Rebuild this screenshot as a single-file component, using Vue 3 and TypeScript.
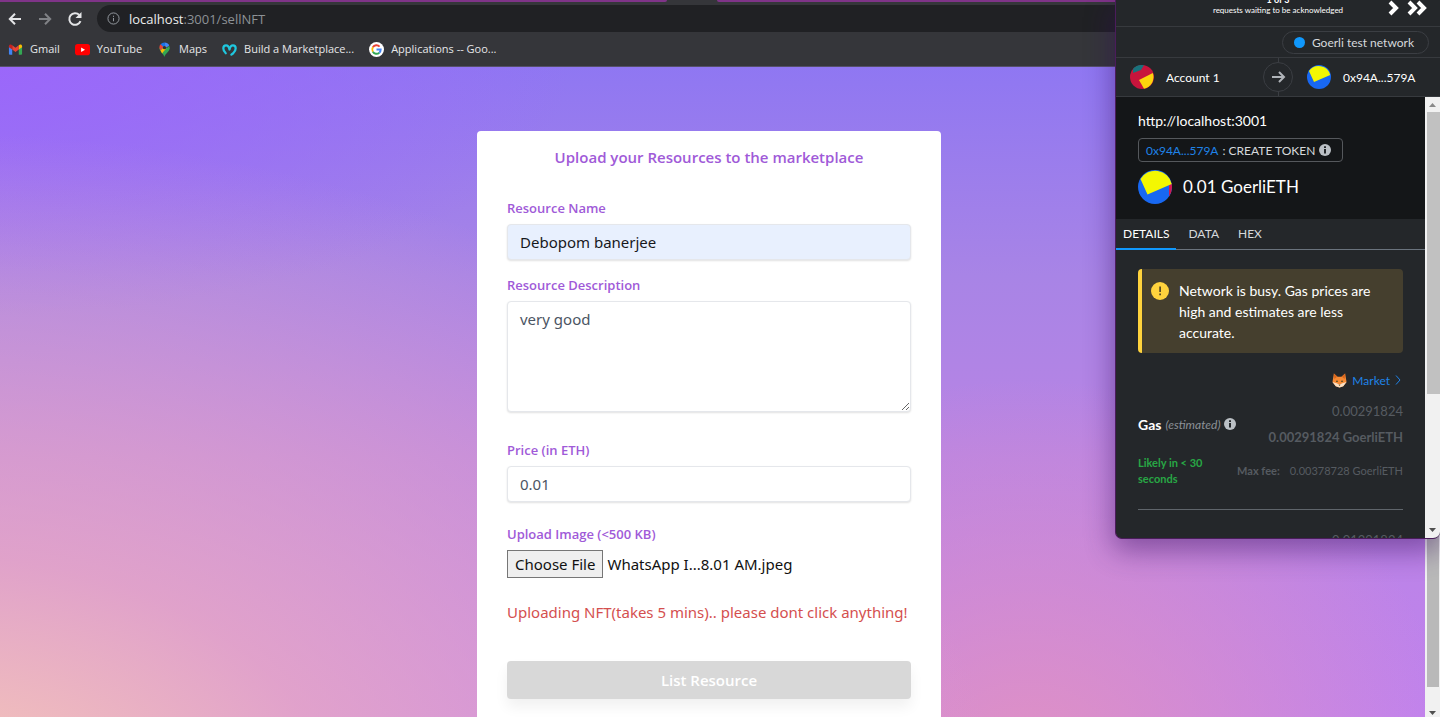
<script setup lang="ts">
import { ref } from 'vue'

const address = ref('localhost:3001/sellNFT')
const resourceName = ref('Debopom banerjee')
const description = ref('very good')
const price = ref('0.01')
const fileName = ref('WhatsApp I...8.01 AM.jpeg')
const activeTab = ref('DETAILS')
const tabs = ['DETAILS', 'DATA', 'HEX']
</script>

<template>
  <div class="window">
    <header class="browser">
      <div class="tabstrip"><span class="tabs-left"></span><span class="tabs-right"></span></div>
      <div class="toolbar">
        <button class="nav" aria-label="Back">
          <svg viewBox="0 0 16 16"><path d="M14 8H3M8 2.800 2.800 8 8 13.200" /></svg>
        </button>
        <button class="nav dim" aria-label="Forward">
          <svg viewBox="0 0 16 16"><path d="M2 8h11M8 2.800 13.200 8 8 13.200" /></svg>
        </button>
        <button class="nav" aria-label="Reload">
          <svg viewBox="0 0 16 16"><path d="M13.500 10.200A5.800 5.800 0 1 1 12.300 4" /><path class="fill" d="M14.500 1v6H8.500z" /></svg>
        </button>
        <div class="omnibox">
          <svg class="site" viewBox="0 0 14 14"><circle cx="7" cy="7" r="6" /><path d="M7 6.400v3.600M7 4v1.300" /></svg>
          <label class="url"><span class="host">localhost</span>:3001/sellNFT<input v-model="address" class="ghost" aria-label="Address" /></label>
        </div>
      </div>
      <nav class="bookmarks">
        <a href="#">
          <svg viewBox="0 0 16 16"><path fill="#4285f4" d="M1 4.500 4.500 7v6.500H2a1 1 0 0 1-1-1z" /><path fill="#34a853" d="M11.500 7 15 4.500v8a1 1 0 0 1-1 1h-2.500z" /><path fill="#ea4335" d="M4.500 3.500 8 6.200l3.500-2.700V8L8 10.600 4.500 8z" /><path fill="#c5221f" d="M1 4.500C1 2.700 3 2 4.500 3.500V8L1 5.500z" /><path fill="#fbbc04" d="M15 4.500c0-1.800-2-2.500-3.500-1V8L15 5.500z" /></svg>
          Gmail</a>
        <a href="#">
          <svg viewBox="0 0 16 16"><rect x="0" y="2.200" width="16" height="12" rx="3" fill="#f00" /><path fill="#fff" d="m6.500 5.800 4.200 2.400-4.200 2.400z" /></svg>
          YouTube</a>
        <a href="#">
          <svg viewBox="0 0 16 16"><path fill="#34a853" d="M8 16C7.300 12.500 2.500 10 2.500 6h11c0 4-4.800 6-5.500 10z" /><path fill="#4285f4" d="M8 .500A5.500 5.500 0 0 1 13 4L8 7z" /><path fill="#1a73e8" d="M3.800 2.500A5.500 5.500 0 0 1 8 .500L9 4 6 6z" /><path fill="#ea4335" d="M3.800 2.500 7 5.500 3.800 9C2.300 7.500 2 4.700 3.800 2.500z" /><path fill="#fbbc04" d="m3.800 9 5.200-5 1 3-4.500 5.300C4.700 11.200 4.200 10 3.800 9z" /><path fill="#34a853" d="M13 4c1.500 4-1.500 6-3.500 8.500L6 11.500z" /><circle cx="8" cy="6" r="1.800" fill="#303134" /></svg>
          Maps</a>
        <a href="#">
          <svg viewBox="0 0 16 16"><path fill="none" stroke="#1fc7de" stroke-width="2.400" stroke-linecap="round" stroke-linejoin="round" d="M4 12C.500 9 .500 3.500 4.300 3.500 6.500 3.500 7.500 5.500 8 8c.500-2.500 1.500-4.500 3.700-4.500 3.800 0 3.800 5.500.300 8.500L10 13.500" /></svg>
          Build a Marketplace...</a>
        <a href="#">
          <svg viewBox="0 0 16 16"><circle cx="8" cy="8" r="8" fill="#fff" /><g fill="none" stroke-width="2"><path stroke="#ea4335" d="M4.100 5.700A4.500 4.500 0 0 1 11.300 4.900" /><path stroke="#fbbc04" d="M4.100 5.700a4.500 4.500 0 0 0 0 4.600" /><path stroke="#34a853" d="M4.100 10.300a4.500 4.500 0 0 0 6.900 1.100" /><path stroke="#4285f4" d="M11 11.400A4.500 4.500 0 0 0 12.500 8H8" /></g></svg>
          Applications -- Goo...</a>
      </nav>
    </header>

    <div class="viewport">
      <main class="page">
        <form class="card" @submit.prevent>
          <h1>Upload your Resources to the marketplace</h1>
          <div class="field name">
            <label for="name">Resource Name</label>
            <input id="name" v-model="resourceName" class="box autofilled" type="text" />
          </div>
          <div class="field description">
            <label for="description">Resource Description</label>
            <textarea id="description" v-model="description" class="box"></textarea>
          </div>
          <div class="field price">
            <label for="price">Price (in ETH)</label>
            <input id="price" v-model="price" class="box" type="text" inputmode="decimal" />
          </div>
          <div class="field upload">
            <label for="file">Upload Image (&lt;500 KB)</label>
            <div class="file">
              <input id="file" type="file" />
              <label class="choose" for="file">Choose File</label>
              <span>{{ fileName }}</span>
            </div>
          </div>
          <p class="notice">Uploading NFT(takes 5 mins).. please dont click anything!</p>
          <button class="submit" type="submit">List Resource</button>
        </form>
      </main>
      <div class="page-scroll">
        <div class="page-thumb"></div>
        <svg viewBox="0 0 15 10"><path d="M4 4h7l-3.500 4z" fill="#505050" /></svg>
      </div>
    </div>

    <aside class="wallet">
      <div class="queue">
        <div class="queue-text"><span class="count">1 of 3</span><span>requests waiting to be acknowledged</span></div>
        <div class="queue-nav">
          <button aria-label="Next request"><svg viewBox="0 0 12 18"><path d="m3 3 6 6-6 6" /></svg></button>
          <button aria-label="Last request"><svg class="double" viewBox="0 0 22 18"><path d="m3 3 6 6-6 6M12 3l6 6-6 6" /></svg></button>
        </div>
      </div>
      <div class="network-row"><span class="network"><i></i>Goerli test network</span></div>
      <div class="accounts">
        <div class="account">
          <svg viewBox="0 0 24 24"><circle cx="12" cy="12" r="12" fill="#c8143c" /><path fill="#18727c" d="M3 4A12 12 0 0 1 14 .200L11 5 3 8z" /><path fill="#fcd40c" d="M9 15 22.800 8A12 12 0 0 1 14 23.800z" /></svg>
          <span>Account 1</span>
        </div>
        <div class="divider"><span><svg viewBox="0 0 16 16"><path d="M2 8h12M9 3l5 5-5 5" /></svg></span></div>
        <div class="account to">
          <svg viewBox="0 0 24 24"><circle cx="12" cy="12" r="12" fill="#1868f2" /><path fill="#f3f702" d="M2 6A12 12 0 0 1 23.200 10L7 17z" /></svg>
          <span>0x94A...579A</span>
        </div>
      </div>
      <div class="wallet-body">
        <div class="wallet-content">
          <section class="summary">
            <p class="origin">http://localhost:3001</p>
            <div class="action"><a href="#">0x94A...579A</a> : CREATE TOKEN
              <svg class="info" viewBox="0 0 12 12"><circle cx="6" cy="6" r="6" /><path d="M5 5h2v4.500H5zM5 2.200h2v1.800H5z" /></svg>
            </div>
            <div class="amount">
              <svg viewBox="0 0 34 34"><circle cx="17" cy="17" r="17" fill="#1868f2" /><path fill="#d31850" d="m31 15.500 2.600-2a17 17 0 0 1-2.600 13z" /><path fill="#f3f702" d="M2.500 9A17 17 0 0 1 33.700 14L9.500 24.500z" /></svg>
              <span>0.01 GoerliETH</span>
            </div>
          </section>
          <div class="tabs" role="tablist">
            <button v-for="tab in tabs" :key="tab" role="tab" :class="{ active: tab === activeTab }" :aria-selected="tab === activeTab" @click="activeTab = tab">{{ tab }}</button>
          </div>
          <section class="details">
            <div class="warning">
              <svg viewBox="0 0 18 18"><circle cx="9" cy="9" r="9" fill="#ffd33d" /><path d="M8.300 4.500h1.600v5.500H8.300zM8.300 11.500h1.600v1.700H8.300z" fill="#4a3f22" /></svg>
              <p>Network is busy. Gas prices are high and estimates are less accurate.</p>
            </div>
            <div class="market">
              <svg class="fox" viewBox="0 0 16 16"><path fill="#f58a35" d="M2 .500 6 4h4l4-3.500 1.500 9L12 14l-4 1.500L4 14 .500 9.500z" /><path fill="#f9dfc4" d="m.500 9.500 4.500 1.500 3 1.500 3-1.500 4.500-1.500L12 14l-4 1.500L4 14z" /><path fill="#d9641c" d="m2 .500 3.500 3.500-3 2.500zM14 .500 10.500 4l3 2.500z" /><circle cx="5.300" cy="8.800" r=".9" fill="#442" /><circle cx="10.700" cy="8.800" r=".9" fill="#442" /><path d="M7 12.500h2l-1 1.300z" fill="#442" /></svg>
              <a href="#">Market</a>
              <svg class="chevron" viewBox="0 0 8 12"><path d="m1 1.500 4 4.500-4 4.500" /></svg>
            </div>
            <div class="gas">
              <div class="gas-label"><b>Gas</b> <em>(estimated)</em>
                <svg class="info" viewBox="0 0 12 12"><circle cx="6" cy="6" r="6" /><path d="M5 5h2v4.500H5zM5 2.200h2v1.800H5z" /></svg>
              </div>
              <div class="gas-values"><span>0.00291824</span><b>0.00291824 GoerliETH</b></div>
            </div>
            <div class="timing">
              <p class="likely">Likely in &lt; 30 seconds</p>
              <div class="max"><b>Max fee:</b><span>0.00378728 GoerliETH</span></div>
            </div>
            <div class="total">0.01291824</div>
          </section>
        </div>
        <div class="wallet-scroll">
          <svg viewBox="0 0 15 15"><path d="M4 10h7l-3.500-4z" fill="#8a8a8a" /></svg>
          <div class="wallet-thumb"></div>
          <svg viewBox="0 0 15 15"><path d="M4 5h7l-3.500 4z" fill="#505050" /></svg>
        </div>
      </div>
    </aside>
  </div>
</template>

<style>
body { margin: 0; overflow: hidden; }
</style>

<style scoped>
* { box-sizing: border-box; }
button, input, textarea { font: inherit; }
button { border: 0; padding: 0; background: none; color: inherit; }
a { text-decoration: none; }
h1, p { margin: 0; }
svg { flex: none; display: block; }

.window { position: relative; display: flex; flex-direction: column; height: 100vh; overflow: hidden; font-family: "Noto Sans", "Open Sans", sans-serif; }

.browser { background: #35363a; border-bottom: 1px solid #55506a; }
.tabstrip { display: flex; justify-content: space-between; gap: 50px; height: 3px; }
.tabstrip span { background: #7f3488; height: 2px; }
.tabs-left { flex: 667; border-bottom-right-radius: 6px; }
.tabs-right { flex: 723; border-bottom-left-radius: 6px; }
.toolbar { display: flex; align-items: center; height: 31px; padding: 0 0 0 7px; gap: 14px; }
.nav { width: 16px; height: 16px; color: #e4e5e7; }
.nav svg { width: 16px; height: 16px; fill: none; stroke: currentColor; stroke-width: 2; }
.nav .fill { fill: currentColor; stroke: none; }
.nav.dim { color: #808286; }
.omnibox { flex: 1; display: flex; align-items: center; gap: 9px; height: 27px; padding-left: 10px; border-radius: 14px 0 0 14px; background: #202124; }
.site { width: 13px; height: 13px; fill: none; stroke: #9aa0a6; stroke-width: 1; }
.url { position: relative; font-family: "Open Sans", sans-serif; font-size: 13px; color: #8d9196; }
.host { color: #eceded; }
.ghost { position: absolute; inset: 0; width: 100%; opacity: 0; }
.bookmarks { display: flex; align-items: center; gap: 15px; height: 32px; padding: 0 8px 2px; }
.bookmarks a { display: flex; align-items: center; gap: 7px; color: #e6e7e9; font-family: "Open Sans", sans-serif; font-size: 11px; line-height: 16px; white-space: nowrap; }
.bookmarks svg { width: 15px; height: 15px; }

.viewport { flex: 1; min-height: 0; display: flex; }
.page { flex: 1; display: flex; align-items: flex-start; justify-content: center; padding: 64px 7px 0 0;
  background:
    radial-gradient(ellipse 75% 105% at -5% 115%, #f9cdb4 0%, rgba(236, 172, 192, .75) 38%, rgba(214, 150, 212, 0) 100%),
    radial-gradient(ellipse 30% 60% at 72% 108%, rgba(226, 146, 192, .95) 0%, rgba(214, 142, 210, 0) 100%),
    radial-gradient(ellipse 40% 38% at 0% 0%, #9b67fa 0%, rgba(155, 103, 250, 0) 100%),
    linear-gradient(180deg, #8f77f2 0%, #a884e6 32%, #b984e4 60%, #c082ee 100%); }
.card { width: 464px; flex: none; min-height: 650px; padding: 15px 30px 32px; border-radius: 4px; background: #fff; color: #a05ad8; }
.card h1 { font-family: "Open Sans", sans-serif; font-size: 15px; line-height: 22px; font-weight: 600; text-align: center; margin-bottom: 31px; }
.field { display: flex; flex-direction: column; }
.field > label { font-family: "Open Sans", sans-serif; font-size: 13px; line-height: 18px; font-weight: 600; margin-bottom: 7px; }
.box { width: 100%; height: 36px; padding: 0 12px; border: 1px solid #e5e7eb; border-radius: 4px; background: #fff; color: #4b5563; font-size: 15px; line-height: 22px; box-shadow: 0 1px 2px rgba(0, 0, 0, .12); outline: none; }
.autofilled { background: #e8f0fe; color: #17181c; }
textarea.box { height: 111px; padding: 6px 12px; resize: vertical; }
.name { margin-bottom: 16px; }
.description { margin-bottom: 29px; }
.price { margin-bottom: 23px; }
.file { display: flex; align-items: center; gap: 4px; position: relative; font-size: 15px; line-height: 22px; color: #111; }
.file input { position: absolute; width: 96px; height: 28px; opacity: 0; }
.choose { padding: 2px 7px; border: 1px solid #767676; background: #efefef; }
.notice { margin: 23px 0 38px; font-size: 15px; line-height: 22px; color: #d44f4f; white-space: nowrap; }
.submit { width: 100%; height: 38px; border-radius: 4px; background: #d8d8d8; color: #fff; font-family: "Open Sans", sans-serif; font-size: 15px; font-weight: 600; box-shadow: 0 8px 14px rgba(0, 0, 0, .06); }
.page-scroll { width: 15px; flex: none; display: flex; flex-direction: column; justify-content: flex-end; background: #f1f1f1; }
.page-thumb { flex: 1; background: #b9b9b9; margin: 15px 1px 20px 2px; }
.page-scroll svg { width: 15px; height: 10px; }

.wallet { position: absolute; top: 0; right: 0; width: 325px; height: 539px; display: flex; flex-direction: column; overflow: hidden; border-left: 1px solid #4b1c5b; border-bottom: 1px solid #4b1c5b; border-radius: 0 0 7px 7px; background: #24272a; color: #fff; font-family: Lato, "Noto Sans", sans-serif; box-shadow: 0 10px 28px 2px rgba(50, 10, 90, .45); }
.queue { position: relative; height: 27px; border-bottom: 1px solid #373a3e; display: flex; align-items: flex-end; justify-content: center; }
.queue-text { display: flex; flex-direction: column; align-items: center; font-size: 8px; line-height: 10px; padding-bottom: 11px; }
.count { font-size: 9px; font-weight: 700; }
.queue-nav { position: absolute; right: 12px; top: -1px; display: flex; gap: 7px; }
.queue-nav svg { width: 12px; height: 18px; fill: none; stroke: #fff; stroke-width: 4; }
.queue-nav .double { width: 22px; }
.network-row { height: 31px; display: flex; align-items: center; justify-content: flex-end; padding-right: 11px; border-bottom: 1px solid #373a3e; }
.network { display: flex; align-items: center; gap: 7px; height: 23px; padding: 0 14px 0 11px; border: 1px solid #3b3e43; border-radius: 12px; font-size: 12px; color: #d6d9dc; }
.network i { width: 11px; height: 11px; border-radius: 50%; background: #1098fc; }
.accounts { height: 39px; display: grid; grid-template-columns: 1fr 30px 1fr; border-bottom: 1px solid #373a3e; }
.account { display: flex; align-items: center; gap: 12px; padding-left: 14px; font-size: 12px; }
.account svg { width: 24px; height: 24px; }
.divider { display: flex; align-items: center; justify-content: center; background: linear-gradient(#3b3e43, #3b3e43) center / 1px 100% no-repeat; }
.divider span { width: 30px; height: 30px; display: flex; align-items: center; justify-content: center; border: 1px solid #3b3e43; border-radius: 50%; background: #24272a; }
.divider svg { width: 16px; height: 16px; fill: none; stroke: #b0b4b9; stroke-width: 2; }
.wallet-body { flex: 1; min-height: 0; display: flex; }
.wallet-content { flex: 1; min-width: 0; overflow: hidden; }
.summary { background: #141618; padding: 14px 22px 15px; }
.origin { font-size: 14px; line-height: 20px; margin-bottom: 7px; }
.action { display: inline-flex; align-items: center; gap: 4px; height: 24px; padding: 0 11px 0 7px; border: 1px solid #55585c; border-radius: 4px; font-size: 12px; white-space: nowrap; color: #d6d9dc; }
.action a { color: #1f83e8; }
.info { width: 12px; height: 12px; fill: #bbc0c5; }
.info path { fill: #24272a; }
.amount { display: flex; align-items: center; gap: 11px; margin-top: 8px; font-size: 17px; line-height: 24px; }
.amount svg { width: 34px; height: 34px; }
.tabs { display: flex; height: 31px; border-bottom: 1px solid #6a737d; }
.tabs button { height: 31px; padding: 0 7px; margin-right: 5px; font-size: 12px; color: #d6d9dc; border-bottom: 2px solid transparent; }
.tabs .active { border-color: #1098fc; color: #fff; }
.details { padding: 19px 22px 0; }
.warning { display: flex; gap: 10px; height: 84px; padding: 11px 20px 0 9px; border-left: 4px solid #ffd33d; border-radius: 4px; background: #453f2e; }
.warning svg { width: 18px; height: 18px; margin-top: 2px; }
.warning p { font-size: 14px; line-height: 21px; }
.market { display: flex; align-items: center; justify-content: flex-end; gap: 5px; height: 16px; margin-top: 19px; font-size: 12px; }
.market a { color: #1f83e8; }
.fox { width: 15px; height: 15px; }
.chevron { width: 8px; height: 12px; fill: none; stroke: #1f83e8; }
.gas { display: flex; justify-content: space-between; align-items: center; margin-top: 10px; }
.gas-label { display: flex; align-items: center; gap: 4px; font-size: 14px; white-space: nowrap; }
.gas-label em { font-size: 12px; color: #8c9197; }
.gas-values { display: flex; flex-direction: column; align-items: flex-end; font-size: 13px; line-height: 26px; color: #565b61; }
.timing { display: flex; justify-content: space-between; align-items: center; margin-top: 5px; padding-bottom: 22px; border-bottom: 1px solid #5f656b; font-size: 11px; line-height: 16px; }
.likely { width: 74px; color: #28a745; font-weight: 700; }
.max { display: flex; gap: 10px; color: #565b61; white-space: nowrap; }
.total { margin-top: 20px; text-align: right; font-size: 13px; line-height: 20px; color: #565b61; }
.wallet-scroll { width: 15px; flex: none; display: flex; flex-direction: column; background: #f1f1f1; }
.wallet-scroll svg { width: 15px; height: 15px; }
.wallet-thumb { flex: none; height: 282px; margin-left: 2px; background: #c1c1c1; }
.wallet-scroll svg:last-child { margin-top: auto; }
</style>
